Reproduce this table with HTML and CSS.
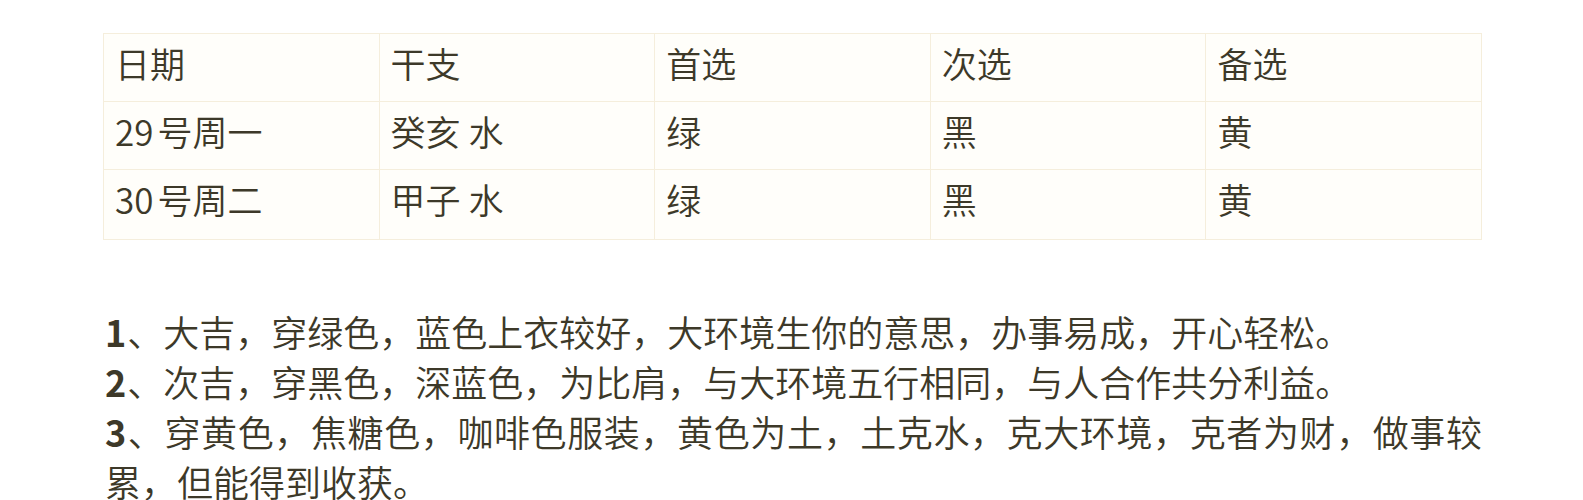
FILE: index.html
```html
<!DOCTYPE html>
<html lang="zh-CN">
<head>
<meta charset="utf-8">
<title>穿衣颜色</title>
<link rel="stylesheet" href="styles.css">
</head>
<body>
<main class="article">
  <table class="color-table">
    <tr>
      <td>日期</td><td>干支</td><td>首选</td><td>次选</td><td>备选</td>
    </tr>
    <tr>
      <td><span class="day">29</span>号周一</td><td>癸亥 水</td><td>绿</td><td>黑</td><td>黄</td>
    </tr>
    <tr class="last">
      <td><span class="day">30</span>号周二</td><td>甲子 水</td><td>绿</td><td>黑</td><td>黄</td>
    </tr>
  </table>
  <p class="notes">
    <b class="num">1</b>、大吉，穿绿色，蓝色上衣较好，大环境生你的意思，办事易成，开心轻松。<br>
    <b class="num">2</b>、次吉，穿黑色，深蓝色，为比肩，与大环境五行相同，与人合作共分利益。<br>
    <b class="num">3</b>、穿黄色，焦糖色，咖啡色服装，黄色为土，土克水，克大环境，克者为财，做事较累，但能得到收获。
  </p>
</main>
</body>
</html>
```

FILE: styles.css
```css
html, body {
  margin: 0;
  padding: 0;
  background: #ffffff;
}

body {
  font-family: "Noto Sans CJK SC", "Noto Sans", sans-serif;
  color: #3d3929;
}

.article {
  width: 1379px;
  padding: 33px 0 0 103px;
}

.color-table {
  width: 100%;
  border-collapse: collapse;
  table-layout: fixed;
  background: #fffefa;
}

.color-table td {
  border: 1px solid #f5eedc;
  padding: 6px 11px 15px;
  font-size: 35px;
  font-weight: 350;
  line-height: 46px;
  white-space: nowrap;
}

.color-table .last td {
  padding-bottom: 17px;
}

.day {
  margin-right: 4px;
}

.notes {
  margin: 66px 0 0 2px;
  font-size: 36px;
  font-weight: 350;
  line-height: 50px;
  text-align: justify;
}

.num {
  font-weight: 600;
  margin-right: 1px;
}
```
